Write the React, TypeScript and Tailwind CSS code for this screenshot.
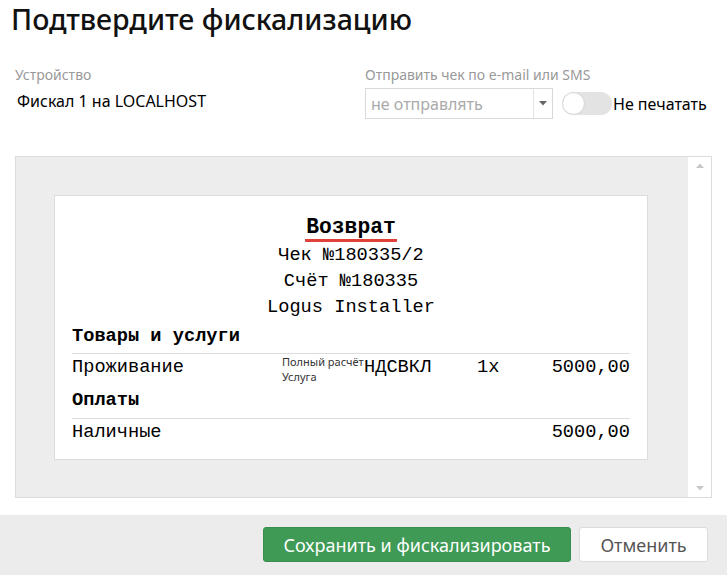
import React from "react";

const ui = { fontFamily: '"Noto Sans", "Open Sans", sans-serif' };
const mono = { fontFamily: '"Liberation Mono", "Courier New", monospace' };

export default function App() {
  return (
    <div className="w-[727px] h-[575px] bg-white flex flex-col overflow-hidden text-black" style={ui}>
      <div className="pl-[11px] h-[50px] text-[28.5px] leading-[38px] font-medium text-[#111]">Подтвердите фискализацию</div>

      <div className="flex mt-[15px] h-[91px]">
        <div className="w-[365px] pl-[15px]">
          <div className="text-[14px] leading-[20px] text-[#999]">Устройство</div>
          <div className="text-[16px] leading-[22px] mt-[5px] pl-[2px]">Фискал 1 на LOCALHOST</div>
        </div>
        <div>
          <div className="text-[14px] leading-[20px] text-[#999]">Отправить чек по e-mail или SMS</div>
          <div className="flex items-center mt-[3px]">
            <div className="w-[188px] h-[31px] border border-[#d9d9d9] flex items-stretch">
              <div className="flex-1 flex items-center pl-[5px] text-[16px] text-[#aaa]">не отправлять</div>
              <div className="w-[19px] border-l border-[#e3e3e3] flex items-center justify-center">
                <svg width="8" height="5" viewBox="0 0 8 5"><path d="M0 0 L8 0 L4 4.5 Z" fill="#666" /></svg>
              </div>
            </div>
            <div className="ml-[9px] w-[50px] h-[23px] rounded-full bg-[#e3e3e3] relative flex items-center">
              <div className="ml-[1px] w-[21px] h-[21px] rounded-full bg-white shadow-[0_0_2px_rgba(0,0,0,0.15)]" />
            </div>
            <div className="ml-[1px] text-[16px] leading-[22px]">Не печатать</div>
          </div>
        </div>
      </div>

      <div className="mx-[15px] h-[342px] border border-[#dcdcdc] flex">
        <div className="flex-1 bg-[#ededed] pt-[38px] pl-[38px] pr-[40px]">
          <div className="bg-white border border-[#dcdcdc] h-[265px] pt-[19px] px-[17px]" style={mono}>
            <div className="flex justify-center">
              <div className="text-[21.33px] leading-[24px] font-bold px-[1px] border-b-[3px] border-[#e0413a] rounded-[1px]">Возврат</div>
            </div>
            <div className="text-center text-[18.67px] leading-[26px]">Чек №180335/2</div>
            <div className="text-center text-[18.67px] leading-[26px]">Счёт №180335</div>
            <div className="text-center text-[18.67px] leading-[26px]">Logus Installer</div>
            <div className="mt-[3px] text-[18.67px] leading-[26px] font-bold pb-[4px] border-b border-[#dcdcdc]">Товары и услуги</div>
            <div className="flex h-[33px] text-[18.67px]">
              <div className="w-[210px] leading-[26px]">Проживание</div>
              <div className="w-[82px] text-[11px] leading-[15px] text-[#333]" style={ui}>
                <div>Полный расчёт</div>
                <div>Услуга</div>
              </div>
              <div className="w-[113px] leading-[26px]">НДСВКЛ</div>
              <div className="leading-[26px]">1x</div>
              <div className="flex-1 text-right leading-[26px]">5000,00</div>
            </div>
            <div className="text-[18.67px] leading-[26px] font-bold pb-[5px] border-b border-[#dcdcdc]">Оплаты</div>
            <div className="flex text-[18.67px] leading-[26px]">
              <div className="flex-1">Наличные</div>
              <div>5000,00</div>
            </div>
          </div>
        </div>
        <div className="w-[23px] bg-white flex flex-col justify-between items-center py-[6px]">
          <svg width="8" height="5" viewBox="0 0 8 5"><path d="M0 5 L8 5 L4 0.5 Z" fill="#c8c8c8" /></svg>
          <svg width="8" height="5" viewBox="0 0 8 5"><path d="M0 0 L8 0 L4 4.5 Z" fill="#c8c8c8" /></svg>
        </div>
      </div>

      <div className="mt-[17px] flex-1 bg-[#ececec] flex justify-end items-start pt-[12px] pr-[19px] gap-[8px]">
        <button className="w-[308px] h-[35px] rounded-[3px] bg-[#3e9a55] text-white text-[18px] leading-[24px] border border-[#388e4e]" style={ui}>Сохранить и фискализировать</button>
        <button className="w-[129px] h-[35px] rounded-[3px] bg-white text-[#555] text-[18px] leading-[24px] border border-[#dcdcdc]" style={ui}>Отменить</button>
      </div>
    </div>
  );
}
